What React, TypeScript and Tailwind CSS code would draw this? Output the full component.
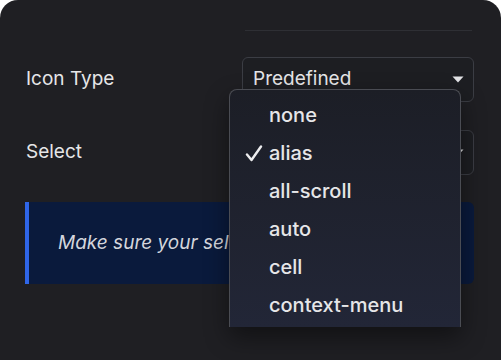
import { useState } from "react";

const cursors = ["none", "alias", "all-scroll", "auto", "cell", "context-menu"];

function Caret() {
    return (
        <svg width="12" height="7" viewBox="0 0 12 7" className="shrink-0">
            <path d="M0.5 0.5 H11.5 L6 6.5 Z" fill="#e4e4e7" />
        </svg>
    );
}

function SelectBox({ value }: { value: string }) {
    return (
        <div className="w-[232px] h-[45px] flex items-center justify-between pl-[10px] pr-[9px] border border-[#3b3d44] rounded-[6px] bg-[#1d1e22]">
            <span className="text-[19px] text-[#e6e6e8]">{value}</span>
            <Caret />
        </div>
    );
}

export default function App() {
    const [selected] = useState("alias");

    return (
        <div className="w-[501px] h-[360px] bg-white overflow-hidden">
            <div
                className="relative w-full h-[380px] bg-[#1f1f23] rounded-[18px] pt-[30px] pl-[25px] pr-[27px]"
                style={{ fontFamily: "Inter, 'Noto Sans', sans-serif" }}
            >
                <div className="ml-[220px] mr-[2px] h-px bg-[#2e2f34]" />

                <div className="mt-[26px] flex items-center justify-between">
                    <span className="pl-px text-[19px] text-[#e6e6e8]">Icon Type</span>
                    <SelectBox value="Predefined" />
                </div>

                <div className="mt-[28px] flex items-center justify-between">
                    <span className="pl-px text-[19px] text-[#e6e6e8]">Select</span>
                    <SelectBox value="alias" />
                </div>

                <div className="mt-[27px] h-[82px] flex items-center border-l-4 border-[#2f66e8] bg-[#0a1a3c] rounded-r-[6px] pl-[29px]">
                    <span className="italic text-[19px] text-[#d4d6dc] whitespace-nowrap">
                        Make sure your selected icon exists
                    </span>
                </div>

                {/* open dropdown list */}
                <div className="absolute left-[229px] top-[89px] w-[232px] h-[238px] rounded-t-[8px] border border-b-0 border-[#4a4c53] bg-gradient-to-b from-[#1c1e26] to-[#222637] shadow-[0_10px_24px_rgba(0,0,0,0.45)] pt-[6px] overflow-hidden">
                    {cursors.map((c) => (
                        <div key={c} className="h-[38px] flex items-center">
                            <span className="w-[39px] flex justify-end pr-[6px]">
                                {c === selected && (
                                    <svg width="18" height="17" viewBox="0 0 18 17">
                                        <path
                                            d="M2 9.5 L6.5 15 L16 1.5"
                                            fill="none"
                                            stroke="#ececee"
                                            strokeWidth="2.4"
                                            strokeLinecap="round"
                                            strokeLinejoin="round"
                                        />
                                    </svg>
                                )}
                            </span>
                            <span className="text-[20px] font-medium text-[#e6e6e8]">{c}</span>
                        </div>
                    ))}
                </div>
            </div>
        </div>
    );
}
